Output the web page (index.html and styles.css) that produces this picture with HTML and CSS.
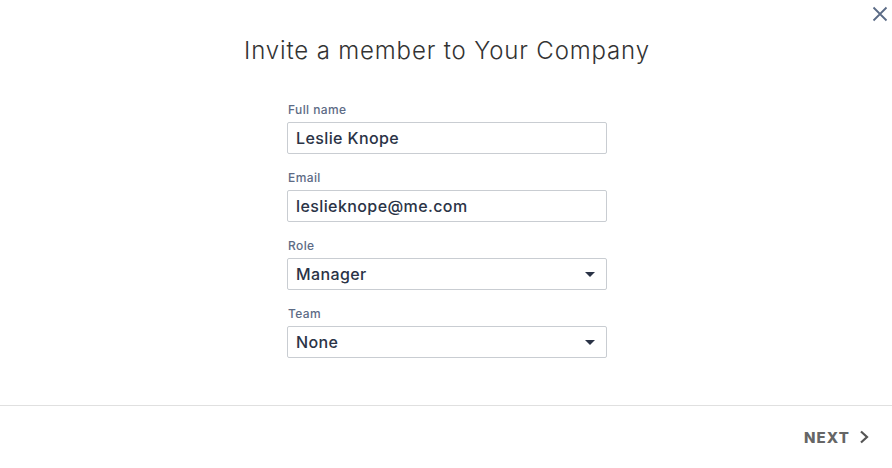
FILE: index.html
```html
<!DOCTYPE html>
<html>
<head>
<meta charset="utf-8">
<link rel="stylesheet" href="styles.css">
</head>
<body>
<div class="modal">
  <button class="close" aria-label="Close">
    <svg width="16" height="16" viewBox="0 0 16 16"><path d="M1.5 1.5 L14.5 14.5 M14.5 1.5 L1.5 14.5" stroke="#5b6b86" stroke-width="1.8" fill="none"/></svg>
  </button>
  <div class="content">
    <h1 class="title">Invite a member to Your Company</h1>
    <form class="form">
      <div class="field">
        <label class="label">Full name</label>
        <div class="input">Leslie Knope</div>
      </div>
      <div class="field">
        <label class="label">Email</label>
        <div class="input">leslieknope@me.com</div>
      </div>
      <div class="field">
        <label class="label">Role</label>
        <div class="input select"><span>Manager</span><span class="caret"></span></div>
      </div>
      <div class="field">
        <label class="label">Team</label>
        <div class="input select"><span>None</span><span class="caret"></span></div>
      </div>
    </form>
  </div>
  <div class="footer">
    <button class="next">NEXT
      <svg width="11" height="14" viewBox="0 0 11 14"><path d="M2 1.5 L8 7 L2 12.5" stroke="#555" stroke-width="2.2" fill="none"/></svg>
    </button>
  </div>
</div>
</body>
</html>
```
FILE: styles.css
```css
html, body {
  margin: 0;
  padding: 0;
  background: #fff;
}
body {
  font-family: Inter, "Noto Sans", sans-serif;
}
.modal {
  position: relative;
  width: 892px;
  height: 468px;
  display: flex;
  flex-direction: column;
}
.close {
  position: absolute;
  top: 6px;
  right: 4px;
  width: 16px;
  height: 16px;
  padding: 0;
  border: 0;
  background: none;
  display: flex;
}
.content {
  flex: 1;
  display: flex;
  flex-direction: column;
  align-items: center;
  padding-left: 2px;
}
.title {
  margin: 37px 0 0;
  font-size: 24px;
  font-weight: 300;
  color: #333;
  line-height: 28px;
  letter-spacing: 0.85px;
}
.form {
  margin-top: 37px;
  width: 320px;
  display: flex;
  flex-direction: column;
  gap: 16px;
}
.field {
  display: flex;
  flex-direction: column;
  gap: 4px;
}
.label {
  font-size: 12px;
  line-height: 16px;
  color: #5d6b85;
  font-weight: 500;
  letter-spacing: 0.4px;
  padding-left: 1px;
}
.input {
  box-sizing: border-box;
  height: 32px;
  border: 1px solid #c9cdd2;
  border-radius: 2px;
  padding: 0 8px;
  font-size: 16px;
  font-weight: 500;
  color: #2a3346;
  letter-spacing: 0.4px;
  display: flex;
  align-items: center;
}
.select {
  justify-content: space-between;
}
.caret {
  width: 0;
  height: 0;
  border-left: 5px solid transparent;
  border-right: 5px solid transparent;
  border-top: 5px solid #2a3346;
  margin-right: 3px;
}
.footer {
  height: 62px;
  border-top: 1px solid #e0e0e0;
  display: flex;
  justify-content: flex-end;
  align-items: center;
  padding-right: 22px;
}
.next {
  border: 0;
  background: none;
  padding: 0;
  font-family: inherit;
  font-size: 15px;
  font-weight: 800;
  color: #666;
  letter-spacing: 1.1px;
  display: flex;
  align-items: center;
  gap: 9px;
}
```
